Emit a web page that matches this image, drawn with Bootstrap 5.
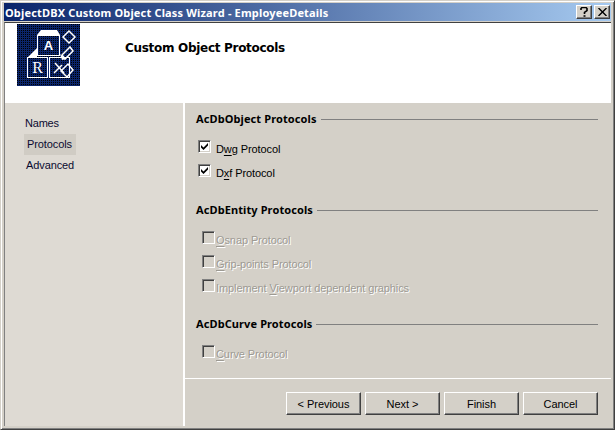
<!DOCTYPE html>
<html><head><meta charset="utf-8">
<link href="https://cdn.jsdelivr.net/npm/bootstrap@5.3.0/dist/css/bootstrap.min.css" rel="stylesheet">
<style>
html,body{margin:0;padding:0;background:#d4d0c8;overflow:hidden}
body{width:615px;height:430px;font-family:"Liberation Sans",sans-serif;font-size:11px;line-height:13px;color:#000}
.win{width:615px;height:430px;background:#d4d0c8;border:1px solid #404040;border-top-color:#d4d0c8;border-left-color:#d4d0c8;box-shadow:inset 1px 1px 0 #fff,inset -1px -1px 0 #808080;padding:2px 3px 3px 3px}
.tbar{height:18px;flex:none;background:linear-gradient(90deg,#0a246a,#a6caf0);padding:0 1px 0 1px}
.ttl{color:#fff;font-weight:700;font-size:11px;font-family:"Noto Sans",sans-serif;white-space:nowrap;letter-spacing:.17px}
.capb{width:16px;height:14px;background:#d4d0c8;border:1px solid #404040;border-top-color:#fff;border-left-color:#fff;box-shadow:inset -1px -1px 0 #808080}
.capb+.capb{margin-left:2px}
.body{height:403px;margin-top:1px;border-top:1px solid #404040;border-left:1px solid #808080}
.hd{height:80px;flex:none;background:#fff;padding-left:12px}
.logo{width:63px;height:62px;margin-top:1px;display:block}
.htitle{font-size:12px;font-weight:700;font-family:"DejaVu Sans",sans-serif;margin-left:45px;margin-top:19px;letter-spacing:-.3px}
.side{width:178px;background:#dedad3;padding:10px 0 0 19px}
.navi{height:21px;line-height:20px;padding-left:2px;width:52px;color:#0a0a30;letter-spacing:-.1px}
.navi.first{padding-left:1px;letter-spacing:-.2px}
.navi.sel{background:#d0ccc4;padding-left:3px;line-height:21px}
.main{border-left:2px solid #fff;flex:1 1 0;min-width:0}
.grp{font-weight:700;font-size:11px;font-family:"Noto Sans",sans-serif;padding:0 13px 0 11px;height:14px;white-space:nowrap;color:#000;letter-spacing:.1px}
.grp::after{content:"";flex:1 1 0;border-top:1px solid #808080;margin-left:4px;margin-top:2px}
.grp2{margin-top:20px}
.grp3{margin-top:19px}
.rows{margin-top:9px}
.chk{height:24px;padding-left:13px;padding-top:6px;white-space:nowrap}
.box{width:13px;height:13px;background:#fff;border:1px solid #808080;border-right-color:#fff;border-bottom-color:#fff;box-shadow:inset 1px 1px 0 #404040,inset -1px -1px 0 #d4d0c8;margin-right:5px;flex:none}
.box svg{display:block;margin:1px}
.lbl{margin-top:3px;letter-spacing:-.1px}
.dis{color:#9d9a93;padding-left:17px}
.dis .lbl{text-shadow:1px 1px 0 #fff}
.dis .box{background:#d4d0c8;margin-right:1px}
.foot{height:48px;flex:none;border-top:1px solid #fff;padding:13px 13px 0 0}
.wbtn{width:75px;height:23px;padding:0;border-radius:0;background:#d4d0c8;color:#000;font-size:11px;line-height:20px;border:1px solid #404040;border-top-color:#fff;border-left-color:#fff;box-shadow:inset -1px -1px 0 #808080;letter-spacing:-.05px}
u{text-underline-offset:2px}
</style></head><body>
<div class="win d-flex flex-column">
 <div class="tbar d-flex align-items-center justify-content-between">
  <span class="ttl">ObjectDBX Custom Object Class Wizard - EmployeeDetails</span>
  <span class="d-flex">
   <span class="capb d-flex align-items-center justify-content-center"><svg width="8" height="10" viewBox="0 0 8 10"><path d="M1 3V1.500L2 .5H6L7 1.500V3.500L4.500 5.500V7M3.500 9H5.500" fill="none" stroke="#000" stroke-width="1.600"/></svg></span>
   <span class="capb d-flex align-items-center justify-content-center"><svg width="9" height="8" viewBox="0 0 9 8"><path d="M.5 0 8.500 8M8.500 0 .5 8" stroke="#000" stroke-width="1.400"/></svg></span>
  </span>
 </div>
 <div class="body d-flex flex-column flex-grow-1">
  <div class="hd d-flex">
   <svg class="logo" viewBox="0 0 63 62" aria-label="logo">
    <defs><pattern id="dots" width="2" height="2" patternUnits="userSpaceOnUse"><rect width="2" height="2" fill="#0a246a"/><rect width="1" height="1" fill="#000"/></pattern></defs>
    <rect width="63" height="62" fill="url(#dots)"/>
    <g fill="none" stroke="#fff" stroke-width="1">
     <rect x="20.500" y="11.500" width="22" height="20"/>
     <rect x="10.500" y="33.500" width="20" height="20"/>
     <rect x="32.500" y="33.500" width="20" height="20"/>
     <path d="M46 13 52 7 58 13 52 19Z" stroke-width="1.500"/>
     <path d="M50 26 53 23 56 27 48 35 45 31Z" stroke-width="1.500"/>
     <path d="M47 44 51 40 56 46 50 53 44 47Z" stroke-width="1.500"/>
    </g>
    <path d="M20 11 24 6H40L43 11ZM11 33 20 24V33ZM45 36 43 30 49 35Z" fill="#fff"/>
    <text x="31.500" y="26" fill="#fff" font-family="Liberation Sans" font-size="13" font-weight="700" text-anchor="middle">A</text>
    <text x="20.500" y="49" fill="#fff" font-family="Liberation Serif" font-size="16" text-anchor="middle">R</text>
    <path d="M38 39 47 49M37 49 45 41" stroke="#fff" stroke-width="1.500"/>
   </svg>
   <div class="htitle">Custom Object Protocols</div>
  </div>
  <div class="d-flex flex-grow-1">
   <div class="side">
    <div class="navi first">Names</div>
    <div class="navi sel">Protocols</div>
    <div class="navi">Advanced</div>
   </div>
   <div class="main d-flex flex-column">
    <div class="flex-grow-1 pt-2">
     <div class="grp d-flex align-items-center">AcDbObject Protocols</div>
     <div class="chk d-flex rows"><span class="box"><svg width="9" height="9" viewBox="0 0 9 9"><path d="M1 3 3.500 5.500 8 1V3.500L3.500 8 1 5.500Z"/></svg></span><span class="lbl">D<u>w</u>g Protocol</span></div>
     <div class="chk d-flex"><span class="box"><svg width="9" height="9" viewBox="0 0 9 9"><path d="M1 3 3.500 5.500 8 1V3.500L3.500 8 1 5.500Z"/></svg></span><span class="lbl">D<u>x</u>f Protocol</span></div>
     <div class="grp d-flex align-items-center grp2">AcDbEntity Protocols</div>
     <div class="chk d-flex dis rows"><span class="box"></span><span class="lbl"><u>O</u>snap Protocol</span></div>
     <div class="chk d-flex dis"><span class="box"></span><span class="lbl"><u>G</u>rip-points Protocol</span></div>
     <div class="chk d-flex dis"><span class="box"></span><span class="lbl">Implement <u>V</u>iewport dependent graphics</span></div>
     <div class="grp d-flex align-items-center grp3">AcDbCurve Protocols</div>
     <div class="chk d-flex dis rows"><span class="box"></span><span class="lbl"><u>C</u>urve Protocol</span></div>
    </div>
    <div class="foot d-flex justify-content-end gap-1">
     <button class="btn wbtn" type="button">&lt; Previous</button>
     <button class="btn wbtn" type="button">Next &gt;</button>
     <button class="btn wbtn" type="button">Finish</button>
     <button class="btn wbtn" type="button">Cancel</button>
    </div>
   </div>
  </div>
 </div>
</div>
</body></html>
